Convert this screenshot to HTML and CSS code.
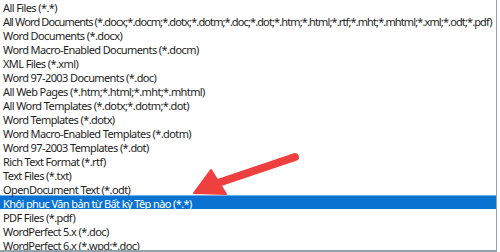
FILE: index.html
```html
<!DOCTYPE html>
<html>
<head>
<meta charset="utf-8">
<link rel="stylesheet" href="styles.css">
</head>
<body>
<div class="box">
  <ul class="list">
    <li>All Files (*.*)</li>
    <li class="long">All Word Documents (*.docx;*.docm;*.dotx;*.dotm;*.doc;*.dot;*.htm;*.html;*.rtf;*.mht;*.mhtml;*.xml;*.odt;*.pdf)</li>
    <li>Word Documents (*.docx)</li>
    <li>Word Macro-Enabled Documents (*.docm)</li>
    <li>XML Files (*.xml)</li>
    <li>Word 97-2003 Documents (*.doc)</li>
    <li>All Web Pages (*.htm;*.html;*.mht;*.mhtml)</li>
    <li>All Word Templates (*.dotx;*.dotm;*.dot)</li>
    <li>Word Templates (*.dotx)</li>
    <li>Word Macro-Enabled Templates (*.dotm)</li>
    <li>Word 97-2003 Templates (*.dot)</li>
    <li>Rich Text Format (*.rtf)</li>
    <li>Text Files (*.txt)</li>
    <li>OpenDocument Text (*.odt)</li>
    <li class="sel">Khôi phục Văn bản từ Bất kỳ Tệp nào (*.*)</li>
    <li>PDF Files (*.pdf)</li>
    <li>WordPerfect 5.x (*.doc)</li>
    <li>WordPerfect 6.x (*.wpd;*.doc)</li>
  </ul>
  <svg class="arrow" width="500" height="252" viewBox="0 0 500 252">
    <line x1="295" y1="157" x2="218" y2="183" stroke="#ef4040" stroke-width="8" stroke-linecap="round"/>
    <polygon points="194,193 211,170 226,194" fill="#ef4040" stroke="#ef4040" stroke-width="2" stroke-linejoin="round"/>
  </svg>
</div>
</body>
</html>
```
FILE: styles.css
```css
html, body {
  margin: 0;
  padding: 0;
  background: #ffffff;
}
.box {
  position: relative;
  width: 496px;
  height: 250px;
  border-right: 1px solid #8fa3ad;
  border-bottom: 2px solid #8fa3ad;
  overflow: hidden;
  background: #fff;
}
.list {
  list-style: none;
  margin: -1px 0 0 0;
  padding: 0;
  font-family: "Noto Sans", "Open Sans", sans-serif;
  font-size: 11px;
  letter-spacing: -0.6px;
  color: #1e1e1e;
}
.list li {
  height: 12px;
  padding-top: 2px;
  line-height: 13px;
  padding-left: 3px;
  white-space: nowrap;
}
.list li.long {
  letter-spacing: -0.88px;
}
.list li.sel {
  background: #0a72d0;
  color: #ffffff;
  box-shadow: inset 0 1px 0 #6fb0e8;
}
.arrow {
  position: absolute;
  left: 0;
  top: 0;
  pointer-events: none;
}
```
